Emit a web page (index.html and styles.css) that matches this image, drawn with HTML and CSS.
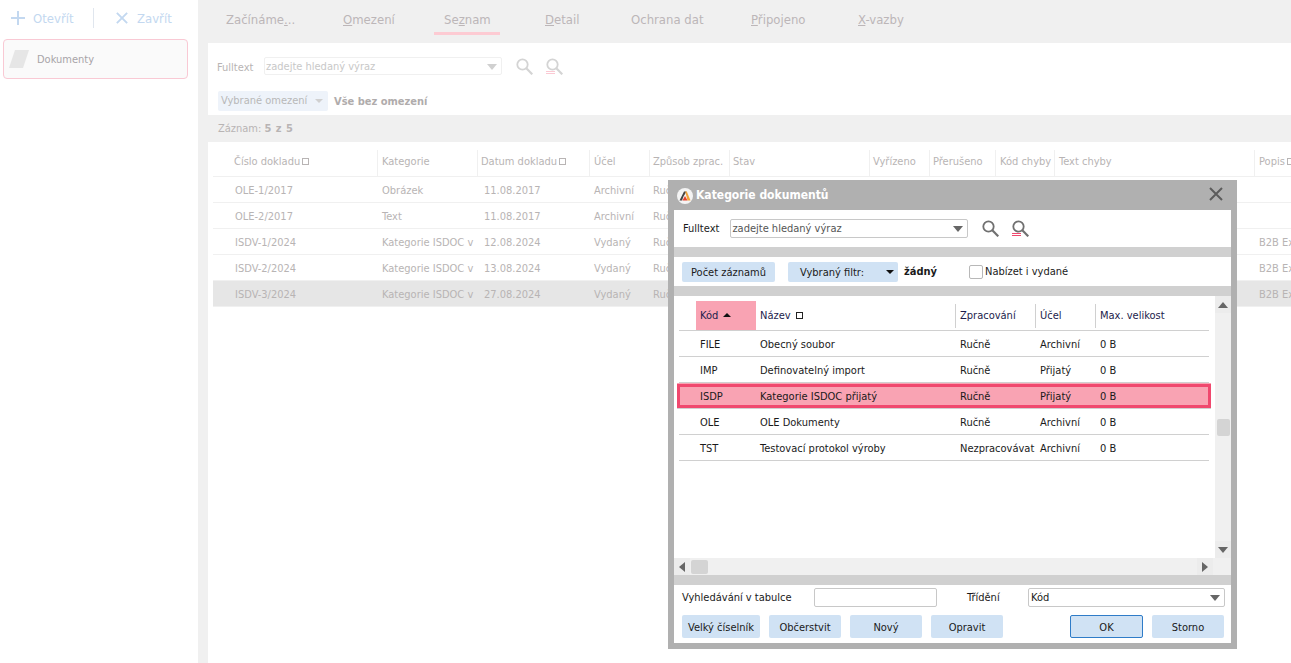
FILE: index.html
```html
<!DOCTYPE html>
<html>
<head>
    <title>Dokumenty</title>
    <link rel="stylesheet" href="styles.css">
</head>
<body>
    <div id="sidebar">
        <div class="side-toolbar">
            <svg class="tool-icon" viewBox="0 0 14 14"><path d="M7 0v14M0 7h14" stroke="#c3d8f0" stroke-width="2" fill="none"/></svg>
            <span class="tool-label">Otevřít</span>
            <span class="tool-divider"></span>
            <svg class="tool-icon tool-icon-small" viewBox="0 0 14 14"><path d="M1 1l12 12M13 1L1 13" stroke="#c3d8f0" stroke-width="2.2" fill="none"/></svg>
            <span class="tool-label">Zavřít</span>
        </div>
        <div class="side-card">
            <svg class="card-icon" viewBox="0 0 20 18"><path d="M6 0h14l-6 18H0z" fill="#e6e6e6"/></svg>
            <span>Dokumenty</span>
        </div>
    </div>

    <div id="main">
        <div class="tabs">
            <div class="tab">Začínáme<u>.</u>..</div>
            <div class="tab"><u>O</u>mezení</div>
            <div class="tab active"><span>Se<u>z</u>nam</span></div>
            <div class="tab"><u>D</u>etail</div>
            <div class="tab">Ochrana dat</div>
            <div class="tab"><u>P</u>řipojeno</div>
            <div class="tab"><u>X</u>-vazby</div>
        </div>
        <div class="filter-panel">
            <div class="fulltext-row">
                <span class="bg-label">Fulltext</span>
                <div class="bg-input">zadejte hledaný výraz<i class="arrow arrow-light"></i></div>
                <svg class="search-icon" viewBox="0 0 17 17"><circle cx="6.5" cy="6.5" r="5.2" fill="none" stroke="#d4d4d4" stroke-width="1.8"/><path d="M10.3 10.3l6 6" stroke="#d4d4d4" stroke-width="2.2"/></svg>
                <svg class="search-icon" viewBox="0 0 17 17"><path d="M0 13.5h9M0 15.5h9" stroke="#fbc9d3"/><circle cx="6.5" cy="6.5" r="5.2" fill="none" stroke="#d4d4d4" stroke-width="1.8"/><path d="M10.3 10.3l6 6" stroke="#d4d4d4" stroke-width="2.2"/></svg>
            </div>
            <div class="limit-row">
                <div class="bg-select">Vybrané omezení<i class="arrow arrow-light"></i></div>
                <b>Vše bez omezení</b>
            </div>
        </div>
        <div class="record-bar">Záznam: <b>5 z 5</b></div>
        <div class="doc-table">
            <div class="doc-row doc-head">
                <div>Číslo dokladu <i class="sort-box"></i></div>
                <div>Kategorie</div>
                <div>Datum dokladu <i class="sort-box"></i></div>
                <div>Účel</div>
                <div>Způsob zprac.</div>
                <div>Stav</div>
                <div>Vyřízeno</div>
                <div>Přerušeno</div>
                <div>Kód chyby</div>
                <div>Text chyby</div>
                <div>Popis <i class="sort-box"></i></div>
            </div>
            <div class="doc-row">
                <div>OLE-1/2017</div><div>Obrázek</div><div>11.08.2017</div><div>Archivní</div><div>Ručně</div>
                <div></div><div></div><div></div><div></div><div></div><div></div>
            </div>
            <div class="doc-row">
                <div>OLE-2/2017</div><div>Text</div><div>11.08.2017</div><div>Archivní</div><div>Ručně</div>
                <div></div><div></div><div></div><div></div><div></div><div></div>
            </div>
            <div class="doc-row">
                <div>ISDV-1/2024</div><div>Kategorie ISDOC v</div><div>12.08.2024</div><div>Vydaný</div><div>Ručně</div>
                <div></div><div></div><div></div><div></div><div></div><div>B2B Ex</div>
            </div>
            <div class="doc-row">
                <div>ISDV-2/2024</div><div>Kategorie ISDOC v</div><div>13.08.2024</div><div>Vydaný</div><div>Ručně</div>
                <div></div><div></div><div></div><div></div><div></div><div>B2B Ex</div>
            </div>
            <div class="doc-row doc-selected">
                <div>ISDV-3/2024</div><div>Kategorie ISDOC v</div><div>27.08.2024</div><div>Vydaný</div><div>Ručně</div>
                <div></div><div></div><div></div><div></div><div></div><div>B2B Ex</div>
            </div>
        </div>
    </div>

    <div id="dialog">
        <div class="dialog-title">
            <svg class="dialog-logo" viewBox="0 0 16 16"><circle cx="8" cy="8" r="8" fill="#f4f4f4"/><path d="M2.5 12.5L7 3.5h2.5l-3 5-1.5 4z" fill="#444"/><path d="M5.5 12.5l2.5-4.5 2.5 4.5z" fill="#e8432e"/><path d="M8.2 3.5h1.6l3.7 9h-3z" fill="#f2a33a"/></svg>
            <span>Kategorie dokumentů</span>
            <svg class="dialog-close" viewBox="0 0 14 14"><path d="M1 1l12 12M13 1L1 13" stroke="#5c5c5c" stroke-width="2" fill="none"/></svg>
        </div>
        <div class="dialog-body">
            <div class="dlg-fulltext">
                <span>Fulltext</span>
                <div class="dlg-input dlg-search">zadejte hledaný výraz<i class="arrow"></i></div>
                <svg class="search-icon" viewBox="0 0 17 17"><circle cx="6.5" cy="6.5" r="5.2" fill="none" stroke="#707070" stroke-width="1.8"/><path d="M10.3 10.3l6 6" stroke="#707070" stroke-width="2.2"/></svg>
                <svg class="search-icon" viewBox="0 0 17 17"><path d="M0 13.5h9M0 15.5h9" stroke="#f0486e"/><circle cx="6.5" cy="6.5" r="5.2" fill="none" stroke="#707070" stroke-width="1.8"/><path d="M10.3 10.3l6 6" stroke="#707070" stroke-width="2.2"/></svg>
            </div>
            <div class="dlg-filter">
                <div class="btn btn-count">Počet záznamů</div>
                <div class="btn btn-filter">Vybraný filtr:<i class="arrow arrow-dark"></i></div>
                <b>žádný</b>
                <label class="check-label"><i class="check-box"></i>Nabízet i vydané</label>
            </div>
            <div class="dlg-grid">
                <div class="grid-main">
                    <div class="grid-rows">
                        <div class="cat-row cat-head">
                            <div class="cat-pad"></div>
                            <div class="cat-sorted">Kód <i class="sort-up"></i></div>
                            <div class="cat-name">Název <i class="sort-box sort-box-dark"></i></div>
                            <div class="cat-sep">Zpracování</div>
                            <div class="cat-sep">Účel</div>
                            <div class="cat-sep">Max. velikost</div>
                        </div>
                        <div class="cat-row"><div class="cat-pad"></div><div>FILE</div><div>Obecný soubor</div><div>Ručně</div><div>Archivní</div><div>0 B</div></div>
                        <div class="cat-row"><div class="cat-pad"></div><div>IMP</div><div>Definovatelný import</div><div>Ručně</div><div>Přijatý</div><div>0 B</div></div>
                        <div class="cat-row cat-selected"><div class="cat-pad"></div><div>ISDP</div><div>Kategorie ISDOC přijatý</div><div>Ručně</div><div>Přijatý</div><div>0 B</div></div>
                        <div class="cat-row"><div class="cat-pad"></div><div>OLE</div><div>OLE Dokumenty</div><div>Ručně</div><div>Archivní</div><div>0 B</div></div>
                        <div class="cat-row"><div class="cat-pad"></div><div>TST</div><div>Testovací protokol výroby</div><div>Nezpracovávat</div><div>Archivní</div><div>0 B</div></div>
                    </div>
                    <div class="hscroll">
                        <div class="scroll-btn"><i class="tri tri-left"></i></div>
                        <div class="hthumb"></div>
                        <div class="scroll-btn scroll-right"><i class="tri tri-right"></i></div>
                    </div>
                </div>
                <div class="vscroll">
                    <div class="scroll-btn"><i class="tri tri-up"></i></div>
                    <div class="vthumb"></div>
                    <div class="scroll-btn scroll-down"><i class="tri tri-down"></i></div>
                    <div class="scroll-corner"></div>
                </div>
            </div>
            <div class="dlg-footer">
                <div class="footer-search">
                    <span class="search-label">Vyhledávání v tabulce</span>
                    <div class="dlg-input table-search"></div>
                    <span class="sort-label">Třídění</span>
                    <div class="dlg-input sort-select">Kód<i class="arrow"></i></div>
                </div>
                <div class="footer-btns">
                    <div class="btn btn-big">Velký číselník</div>
                    <div class="btn">Občerstvit</div>
                    <div class="btn">Nový</div>
                    <div class="btn">Opravit</div>
                    <div class="btn btn-ok">OK</div>
                    <div class="btn">Storno</div>
                </div>
            </div>
        </div>
    </div>
</body>
</html>
```

FILE: styles.css
```css
* {
    margin: 0;
    padding: 0;
    box-sizing: border-box;
}

body {
    display: flex;
    height: 663px;
    overflow: hidden;
    background: #fff;
    font-family: "DejaVu Sans Condensed", "DejaVu Sans", sans-serif;
    font-size: 11px;
    color: #b8b4b4;
}

i { display: inline-block; font-style: normal; }

/* left column */
#sidebar {
    width: 198px;
    flex: none;
}

.side-toolbar {
    display: flex;
    align-items: center;
    height: 39px;
    padding: 0 0 3px 11px;
    color: #c3d8f0;
    font-size: 13px;
}

.tool-icon { width: 14px; height: 14px; flex: none; }
.tool-icon-small { width: 12px; height: 12px; }
.tool-label { margin-left: 8px; width: 44px; }

.tool-divider {
    width: 1px;
    height: 20px;
    margin: 0 22px 0 16px;
    background: #e0e6ee;
}

.tool-label:last-child { margin-left: 9px; }

.side-card {
    display: flex;
    align-items: center;
    gap: 8px;
    height: 40px;
    margin-left: 3px;
    width: 185px;
    padding-left: 5px;
    background: #fafafa;
    border: 1px solid #f9c9d4;
    border-radius: 4px;
    color: #a8a4a8;
}

.card-icon { width: 20px; height: 18px; }

/* main part */
#main {
    flex: 1;
    display: flex;
    flex-direction: column;
    background: #f0f0f0;
    min-width: 0;
}

.tabs {
    display: grid;
    grid-template-columns: 117px 101px 101px 86px 120px 107px auto;
    height: 43px;
    padding: 12px 0 0 18px;
    font-size: 13px;
    color: #bcb6b8;
}

.tab { padding-left: 10px; white-space: nowrap; }
.tab.active { padding-left: 0; }

.tab.active span {
    display: block;
    width: 66px;
    height: 23px;
    padding-left: 10px;
    border-bottom: 3px solid #fdcbd3;
}

.filter-panel {
    height: 72px;
    margin-left: 10px;
    padding: 14px 0 0 9px;
    background: #fff;
}

.fulltext-row {
    display: flex;
    align-items: center;
    gap: 13px;
    height: 18px;
}

.bg-label { width: 34px; padding-top: 2px; }

.bg-input {
    position: relative;
    width: 238px;
    height: 18px;
    padding-left: 1px;
    margin-right: 1px;
    line-height: 18px;
    border: 1px solid #f0f0f0;
    border-radius: 2px;
    color: #c8c8c8;
}

.search-icon { width: 17px; height: 17px; flex: none; }

.limit-row {
    display: flex;
    align-items: center;
    gap: 6px;
    margin-top: 16px;
    margin-left: 1px;
    color: #b0acac;
}

.bg-select {
    position: relative;
    width: 110px;
    height: 20px;
    padding-left: 3px;
    line-height: 20px;
    background: #eef3fa;
    border-radius: 2px;
    color: #b8b8b8;
}

.arrow {
    position: absolute;
    right: 4px;
    top: 6px;
    border-left: 5px solid transparent;
    border-right: 5px solid transparent;
    border-top: 6px solid #666;
}

.arrow-light { border-top-color: #d0d0d0; }

.bg-select .arrow {
    top: 8px;
    right: 5px;
    border-left-width: 4px;
    border-right-width: 4px;
    border-top-width: 4px;
}

.record-bar {
    height: 27px;
    padding: 7px 0 0 20px;
    color: #b8b4b4;
}

.record-bar b { word-spacing: 1px; }

/* background table */
.doc-table {
    flex: 1;
    margin-left: 10px;
    padding-left: 5px;
    background: #fff;
}

.doc-row {
    display: grid;
    grid-template-columns: 164px 100px 112px 60px 80px 140px 60px 66px 59px 200px 60px;
    height: 26px;
    line-height: 25px;
    border-bottom: 1px solid #f0f0f0;
}

.doc-row > div { padding: 1px 0 0 5px; white-space: nowrap; overflow: hidden; }
.doc-row > div:first-child { padding-left: 22px; }
.doc-row > div:nth-child(3) { padding-left: 7px; }
.doc-row > div:nth-child(5) { padding-left: 4px; }

.doc-head {
    height: 35px;
    padding-top: 8px;
    line-height: 22px;
}

.doc-head > div + div { border-left: 1px solid #f0f0f0; padding-left: 4px; }
.doc-head > div:first-child { padding-left: 21px; }
.doc-head > div:nth-child(3),
.doc-head > div:nth-child(5),
.doc-head > div:nth-child(6),
.doc-head > div:nth-child(7),
.doc-head > div:nth-child(8) { padding-left: 3px; }

.doc-selected { background: #e6e6e6; }

.sort-box {
    width: 7px;
    height: 7px;
    margin-left: -1px;
    border: 1px solid #b8b4b4;
}

.sort-box-dark { border-color: #222; margin-left: 2px; }

/* dialog */
#dialog {
    position: absolute;
    left: 668px;
    top: 180px;
    width: 569px;
    height: 469px;
    padding: 0 6px 6px;
    background: #b0b0b0;
    color: #1a1a1a;
}

.dialog-title {
    display: flex;
    align-items: center;
    height: 30px;
    padding: 0 0 0 3px;
    color: #fff;
    font-size: 12px;
    font-weight: bold;
}

.dialog-logo { width: 16px; height: 16px; margin-right: 3px; margin-top: 1px; }
.dialog-close { width: 14px; height: 14px; margin-left: auto; margin-right: 8px; margin-top: -3px; }

.dialog-body {
    display: flex;
    flex-direction: column;
    height: 433px;
    background: #fff;
}

.dlg-fulltext {
    display: flex;
    align-items: center;
    height: 37px;
    padding: 0 0 0 9px;
}

.dlg-input {
    position: relative;
    height: 19px;
    padding-left: 1px;
    line-height: 17px;
    background: #fff;
    border: 1px solid #c8c8c8;
    border-radius: 2px;
}

.dlg-search {
    width: 238px;
    margin: 0 14px 0 11px;
    color: #555;
}

.dlg-fulltext svg + svg { margin-left: 13px; }

.dlg-filter {
    display: flex;
    align-items: center;
    height: 49px;
    padding: 0 0 0 8px;
    border-top: 10px solid #d0d0d0;
    border-bottom: 10px solid #d0d0d0;
}

.btn {
    height: 23px;
    line-height: 25px;
    width: 72px;
    text-align: center;
    background: #d0e2f4;
    border-radius: 2px;
    flex: none;
}

.btn-count { width: 93px; height: 20px; line-height: 21px; }

.btn-filter {
    position: relative;
    width: 110px;
    height: 20px;
    line-height: 21px;
    margin: 0 6px 0 13px;
    padding-left: 12px;
    text-align: left;
}

.arrow-dark {
    top: 8px;
    right: 4px;
    border-left-width: 4px;
    border-right-width: 4px;
    border-top-width: 4px;
    border-top-color: #111;
}

.dlg-filter b { width: 65px; }

.check-label { display: flex; align-items: center; gap: 2px; }

.check-box {
    width: 14px;
    height: 14px;
    background: #fff;
    border: 1px solid #b8b8b8;
    border-radius: 2px;
}

.dlg-grid {
    display: flex;
    height: 279px;
}

.grid-main {
    flex: 1;
    display: flex;
    flex-direction: column;
    min-width: 0;
}

.grid-rows {
    flex: 1;
    padding: 5px 6px 0 5px;
}

.cat-row {
    display: grid;
    grid-template-columns: 17px 60px 199px 80px 60px 114px;
    height: 26px;
    line-height: 25px;
    border-bottom: 1px solid #d0d0d0;
}

.cat-row > div { padding: 1px 0 0 4px; white-space: nowrap; overflow: hidden; }
.cat-row > div:nth-child(n+4) { padding-left: 5px; }
.cat-row .cat-pad { padding: 0; }

.cat-head { height: 30px; line-height: 28px; color: #1c1c4c; }
.cat-sorted { background: #f9a3b3; }
.cat-sep { position: relative; }

.cat-sep::before {
    content: "";
    position: absolute;
    left: 0;
    top: 3px;
    bottom: 2px;
    width: 1px;
    background: #d0d0d0;
}

.sort-up {
    margin-left: 2px;
    vertical-align: 2px;
    border-left: 4px solid transparent;
    border-right: 4px solid transparent;
    border-bottom: 4px solid #111;
}

.cat-selected {
    margin: 0 -2px;
    padding: 0 2px;
    background: #f9a3b3;
    border-top: 1px solid #f9a3b3;
    box-shadow: inset 0 0 0 3px #f0486e;
    line-height: 24px;
}

.hscroll {
    display: flex;
    height: 17px;
    background: #f0f0f0;
}

.scroll-btn {
    display: flex;
    align-items: center;
    justify-content: center;
    width: 16px;
    height: 17px;
    flex: none;
    background: #ececec;
}

.scroll-right { margin-left: auto; margin-right: 2px; }
.hthumb { width: 17px; height: 14px; margin: 2px 0 0 1px; background: #d4d4d4; border-radius: 2px; }

.vscroll {
    display: flex;
    flex-direction: column;
    width: 16px;
    background: #f0f0f0;
}

.vthumb { width: 13px; height: 17px; margin: 106px 0 0 2px; background: #d4d4d4; border-radius: 2px; }
.scroll-down { margin-top: auto; }
.scroll-corner { height: 17px; background: #f0f0f0; flex: none; }

.tri { width: 0; height: 0; }
.tri-up { border: 5px solid transparent; border-top: 0; border-bottom: 6px solid #666; }
.tri-down { border: 5px solid transparent; border-bottom: 0; border-top: 6px solid #666; }
.tri-left { border: 5px solid transparent; border-left: 0; border-right: 6px solid #666; }
.tri-right { border: 5px solid transparent; border-right: 0; border-left: 6px solid #666; }

.dlg-footer {
    flex: 1;
    padding: 3px 0 0 8px;
    border-top: 10px solid #d0d0d0;
}

.footer-search {
    display: flex;
    align-items: center;
    height: 19px;
}

.search-label { width: 132px; }
.table-search { width: 123px; }
.sort-label { margin-left: 30px; width: 61px; }
.sort-select { width: 197px; padding-left: 2px; line-height: 18px; }

.footer-btns {
    display: flex;
    gap: 9px;
    margin-top: 8px;
}

.btn-big { width: 78px; }

.btn-ok {
    width: 73px;
    margin-left: 58px;
    line-height: 23px;
    border: 1px solid #2f7cc8;
}
```
